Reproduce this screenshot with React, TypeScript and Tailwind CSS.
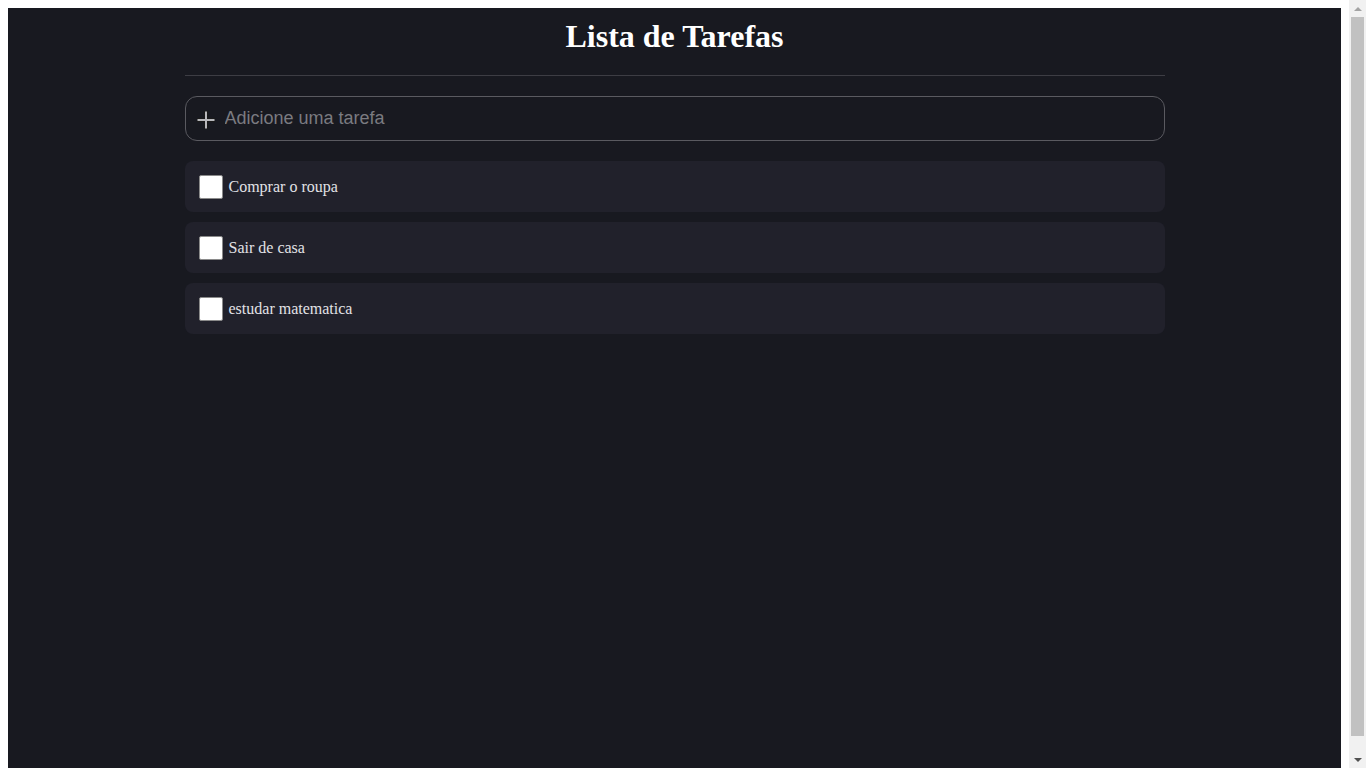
import { useState } from "react";

interface Tarefa {
  id: number;
  texto: string;
  feita: boolean;
}

const iniciais: Tarefa[] = [
  { id: 1, texto: "Comprar o roupa", feita: false },
  { id: 2, texto: "Sair de casa", feita: false },
  { id: 3, texto: "estudar matematica", feita: false },
];

function Scrollbar() {
  return (
    <div className="w-[17px] shrink-0 bg-[#f1f1f1] flex flex-col items-center">
      <div className="h-[17px] flex items-center justify-center">
        <span className="w-0 h-0 border-l-[4px] border-r-[4px] border-b-[4px] border-l-transparent border-r-transparent border-b-[#a3a3a3]" />
      </div>
      <div className="w-[13px] flex-1 bg-[#c1c1c1] mb-[15px]" />
      <div className="h-[17px] flex items-center justify-center">
        <span className="w-0 h-0 border-l-[4px] border-r-[4px] border-t-[4px] border-l-transparent border-r-transparent border-t-[#505050]" />
      </div>
    </div>
  );
}

export default function App() {
  const [tarefas, setTarefas] = useState<Tarefa[]>(iniciais);
  const [nova, setNova] = useState("");

  function adicionar(e: React.FormEvent) {
    e.preventDefault();
    if (!nova.trim()) return;
    setTarefas((prev) => [...prev, { id: Date.now(), texto: nova.trim(), feita: false }]);
    setNova("");
  }

  function alternar(id: number) {
    setTarefas((prev) => prev.map((t) => (t.id === id ? { ...t, feita: !t.feita } : t)));
  }

  return (
    <div className="h-screen overflow-hidden flex bg-white">
      <div className="flex-1 pt-2 px-2">
        <div className="h-full bg-[#181920] font-['Liberation_Serif',serif]">
          <div className="max-w-[980px] mx-auto pt-[10px]">
            <h1 className="text-[32px] leading-[36px] font-bold text-white text-center mb-[21px]">
              Lista de Tarefas
            </h1>
            <hr className="border-0 border-t border-[#3d3d44]" />

            <form
              onSubmit={adicionar}
              className="mt-5 h-[45px] flex items-center gap-[10px] px-[11px] border border-[#5a5a60] rounded-[12px] bg-[#181920]"
            >
              <svg width="18" height="18" viewBox="0 0 18 18" className="shrink-0 mt-[2px]">
                <path d="M9 0v18M0 9h18" stroke="#1a1a1a" strokeWidth="4" />
                <path d="M9 0.5v17M0.5 9h17" stroke="#b8b8bc" strokeWidth="2" />
              </svg>
              <input
                value={nova}
                onChange={(e) => setNova(e.target.value)}
                placeholder="Adicione uma tarefa"
                className="flex-1 bg-transparent outline-none text-[18px] text-[#d0d0d0] placeholder-[#7b7b80] font-['Liberation_Sans',Arial,sans-serif] pb-[1px]"
              />
            </form>

            <ul className="mt-5 flex flex-col gap-[10px]">
              {tarefas.map((t) => (
                <li
                  key={t.id}
                  onClick={() => alternar(t.id)}
                  className="h-[51px] flex items-center gap-[6px] px-[14px] rounded-[8px] bg-[#21212b] cursor-pointer"
                >
                  <span className="w-6 h-6 shrink-0 bg-white border border-[#8a8a8a] rounded-[2px] flex items-center justify-center text-[#21212b] text-sm">
                    {t.feita ? "✓" : ""}
                  </span>
                  <span className={"pt-[1px] text-[16px] text-[#e2e2e6] " + (t.feita ? "line-through" : "")}>
                    {t.texto}
                  </span>
                </li>
              ))}
            </ul>
          </div>
        </div>
      </div>
      <Scrollbar />
    </div>
  );
}
